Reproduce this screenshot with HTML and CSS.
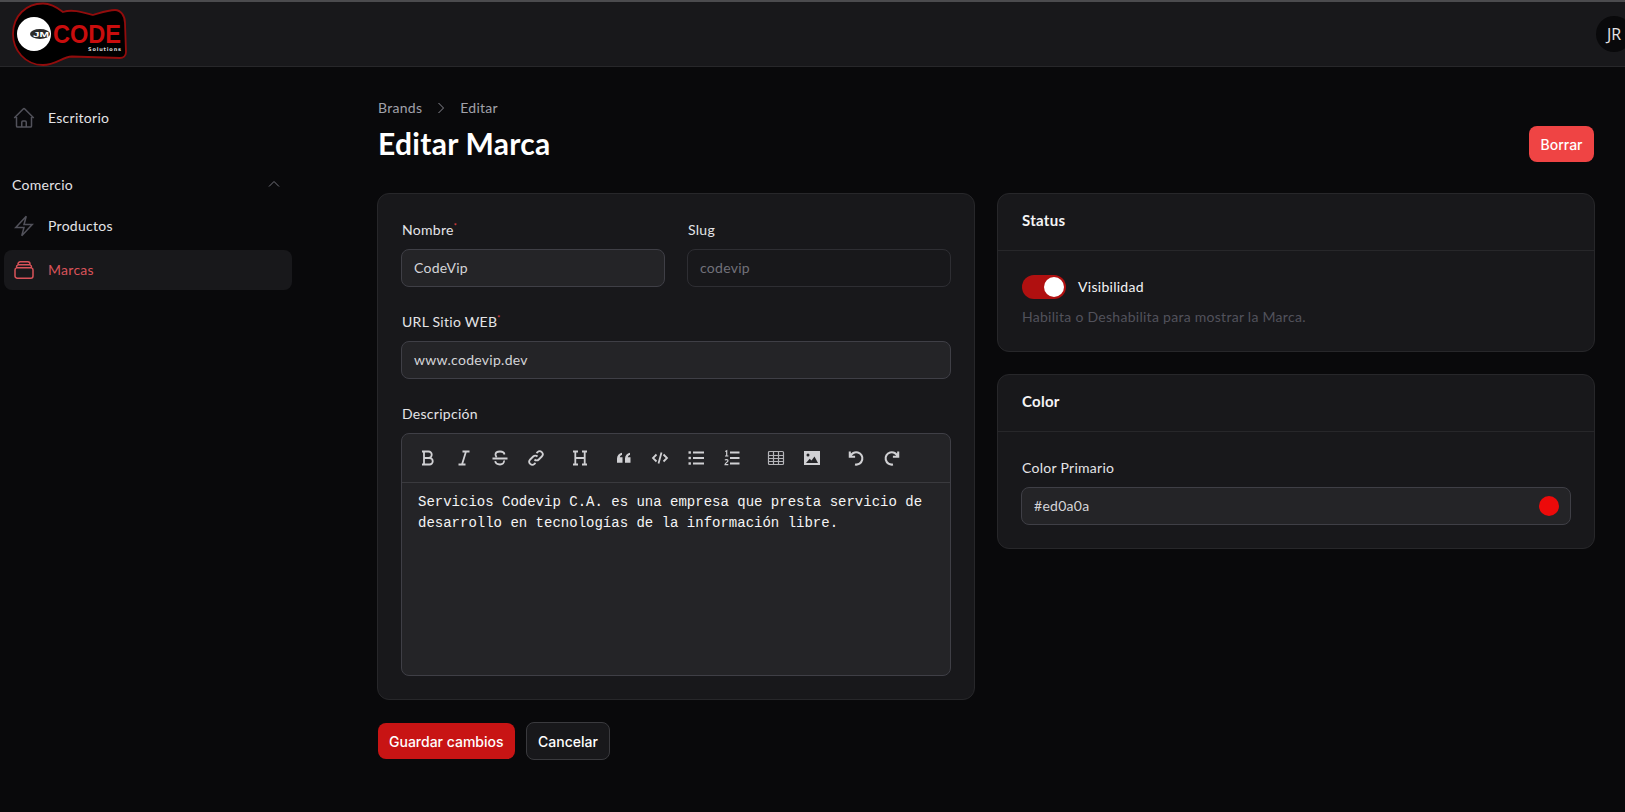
FILE: index.html
```html
<!DOCTYPE html>
<html lang="es">
<head>
    <meta charset="UTF-8">
    <meta name="viewport" content="width=device-width, initial-scale=1.0">
    <title>Editar Marca</title>
    <link rel="stylesheet" href="styles.css">
</head>
<body>
    <header class="topbar">
        <svg class="logo" viewBox="0 0 130 68" width="130" height="68">
            <path d="M43 3.500C52 3.500 58 8 63 12C72 9 82 12 93 15C100 13 108 10 115 10C121 10 125 16 125 23L126 52C126 56 123 58 120 58L72 56.500C62 57 56 65 43 65C25 65 13 50 13 34C13 16 26 3.500 43 3.500Z" fill="#000" stroke="#920c0c" stroke-width="1.800"/>
            <circle cx="34" cy="34" r="17" fill="#fff"/>
            <ellipse cx="40" cy="34" rx="10" ry="5" fill="#2a2a2a"/>
            <text x="33" y="37" class="logo-jm" textLength="16" lengthAdjust="spacingAndGlyphs">JM</text>
            <text x="53" y="43" class="logo-code" textLength="68" lengthAdjust="spacingAndGlyphs">CODE</text>
            <text x="88" y="51" class="logo-sol" textLength="33" lengthAdjust="spacing">Solutions</text>
        </svg>
        <div class="avatar">JR</div>
    </header>

    <div class="layout">
        <aside class="sidebar">
            <a class="nav-item">
                <svg class="nav-icon" viewBox="0 0 24 24"><path d="M2.25 12l8.954-8.955c.44-.439 1.152-.439 1.591 0L21.75 12M4.5 9.75v10.125c0 .621.504 1.125 1.125 1.125H9.75v-4.875c0-.621.504-1.125 1.125-1.125h2.25c.621 0 1.125.504 1.125 1.125V21h4.125c.621 0 1.125-.504 1.125-1.125V9.75M8.25 21h8.25"/></svg>
                <span>Escritorio</span>
            </a>
            <div class="nav-group">
                <span>Comercio</span>
                <svg class="nav-chevron" viewBox="0 0 24 24"><path d="M4.5 15.75l7.5-7.5 7.5 7.5"/></svg>
            </div>
            <a class="nav-item">
                <svg class="nav-icon" viewBox="0 0 24 24"><path d="M3.75 13.5l10.5-11.25L12 10.5h8.25L9.75 21.75 12 13.5H3.75z"/></svg>
                <span>Productos</span>
            </a>
            <a class="nav-item active">
                <svg class="nav-icon" viewBox="0 0 24 24"><path d="M6 6.878V6a2.25 2.25 0 012.25-2.25h7.5A2.25 2.25 0 0118 6v.878m-12 0c.235-.083.487-.128.75-.128h10.5c.263 0 .515.045.75.128m-12 0A2.25 2.25 0 004.5 9v.878m13.5-3A2.25 2.25 0 0119.5 9v.878m0 0a2.246 2.246 0 00-.75-.128H5.25c-.263 0-.515.045-.75.128m15 0A2.25 2.25 0 0121 12v6a2.25 2.25 0 01-2.25 2.25H5.25A2.25 2.25 0 013 18v-6c0-.98.626-1.813 1.5-2.122"/></svg>
                <span>Marcas</span>
            </a>
        </aside>

        <main class="content">
            <div class="page-head">
                <div>
                    <nav class="crumbs">
                        <span>Brands</span>
                        <svg viewBox="0 0 24 24"><path d="M8.25 4.5l7.5 7.5-7.5 7.5"/></svg>
                        <span>Editar</span>
                    </nav>
                    <h1>Editar Marca</h1>
                </div>
                <button class="btn btn-delete">Borrar</button>
            </div>

            <div class="columns">
                <section class="card form-card">
                    <div class="two-col">
                        <div>
                            <label class="field-label">Nombre<sup>*</sup></label>
                            <div class="input">CodeVip</div>
                        </div>
                        <div>
                            <label class="field-label">Slug</label>
                            <div class="input disabled">codevip</div>
                        </div>
                    </div>
                    <div class="field">
                        <label class="field-label">URL Sitio WEB<sup>*</sup></label>
                        <div class="input">www.codevip.dev</div>
                    </div>
                    <div class="field">
                        <label class="field-label">Descripción</label>
                        <div class="editor">
                            <div class="toolbar">
                                <div class="tool-group">
                                    <button class="tool"><svg viewBox="0 0 18 18"><path d="M3 2.500h6.500a3.200 3.200 0 0 1 0 6.500H5M5 2.500v13M5 9h5.500a3.200 3.200 0 0 1 0 6.500H3"/></svg></button>
                                    <button class="tool"><svg viewBox="0 0 18 18"><path d="M7.500 2.500h7M3.500 15.500h7M11 2.500L7 15.500"/></svg></button>
                                    <button class="tool"><svg viewBox="0 0 18 18"><path d="M13.500 5.500c-.300-2-2-3-4.500-3-3 0-4.500 1.300-4.500 3 0 1 .400 1.800 1.200 2.500M1.500 9.500h15M13 11.500c.500 2.500-1.500 4-4 4-3 0-4.500-1.300-4.800-3.300"/></svg></button>
                                    <button class="tool"><svg viewBox="0 0 18 18"><path d="M7.500 10.500a3 3 0 0 0 4.300 0l3-3a3 3 0 0 0-4.300-4.300l-1 1M10.500 7.500a3 3 0 0 0-4.300 0l-3 3a3 3 0 0 0 4.300 4.300l1-1"/></svg></button>
                                </div>
                                <div class="tool-group">
                                    <button class="tool"><svg viewBox="0 0 18 18"><path d="M2 2.500h5M11 2.500h5M2 15.500h5M11 15.500h5M4.300 2.500v13M13.700 2.500v13M4.300 9h9.400"/></svg></button>
                                </div>
                                <div class="tool-group">
                                    <button class="tool"><svg viewBox="0 0 18 18"><path class="solid" d="M2 9.500C2 6.500 4 4.300 7 3.700v2.300C5.800 6.400 5 7.200 4.800 8.200h2.700v5.500H2zM10 9.500C10 6.500 12 4.300 15 3.700v2.300c-1.200.400-2 1.200-2.200 2.200h2.700v5.500H10z"/></svg></button>
                                    <button class="tool"><svg viewBox="0 0 18 18"><path d="M5.500 5.500L2 9l3.500 3.500M12.500 5.500L16 9l-3.500 3.500M10.500 3.500l-3 11"/></svg></button>
                                    <button class="tool"><svg viewBox="0 0 18 18"><path d="M6 3.500H17M6 9H17M6 14.500H17"/><rect class="solid" x="1.500" y="2.300" width="2.400" height="2.400"/><rect class="solid" x="1.500" y="7.800" width="2.400" height="2.400"/><rect class="solid" x="1.500" y="13.300" width="2.400" height="2.400"/></svg></button>
                                    <button class="tool"><svg viewBox="0 0 18 18"><path d="M7 3.500H16.500M7 9H16.500M7 14.500H16.500"/><path class="thin" d="M2.300 2.500L3.700 1.700V7M2 7h3.400M2 11.200c.500-1 3-.900 3 .500 0 1.200-3 2.300-3 4h3.300"/></svg></button>
                                </div>
                                <div class="tool-group">
                                    <button class="tool"><svg viewBox="0 0 18 18"><path class="thin table" d="M2.500 2.500h13a1 1 0 0 1 1 1v11a1 1 0 0 1-1 1h-13a1 1 0 0 1-1-1v-11a1 1 0 0 1 1-1zM1.500 6.500h15M1.500 9.500h15M1.500 12.500h15M6.500 2.500v13M11.500 2.500v13"/></svg></button>
                                    <button class="tool"><svg viewBox="0 0 18 18"><path class="solid" fill-rule="evenodd" d="M1 2h16v14H1zM5 4.500a1.500 1.500 0 1 0 0 3 1.500 1.500 0 0 0 0-3zM3 14h12l-3.500-6.500-3 4-1.800-1.800z"/></svg></button>
                                </div>
                                <div class="tool-group">
                                    <button class="tool"><svg viewBox="0 0 18 18"><path class="arc" d="M2.800 2.500v5.300h5.300M3.300 7.500A6.200 6.200 0 1 1 8 15.500"/></svg></button>
                                    <button class="tool"><svg viewBox="0 0 18 18"><path class="arc" d="M15.200 2.500v5.300H9.900M14.700 7.500A6.200 6.200 0 1 0 10 15.500"/></svg></button>
                                </div>
                            </div>
                            <div class="editor-text">Servicios Codevip C.A. es una empresa que presta servicio de desarrollo en tecnologías de la información libre.</div>
                        </div>
                    </div>
                </section>

                <div class="side-column">
                    <section class="card">
                        <h2 class="card-title">Status</h2>
                        <div class="card-body">
                            <div class="toggle-row">
                                <span class="toggle"><span class="knob"></span></span>
                                <span>Visibilidad</span>
                            </div>
                            <p class="hint">Habilita o Deshabilita para mostrar la Marca.</p>
                        </div>
                    </section>
                    <section class="card">
                        <h2 class="card-title">Color</h2>
                        <div class="card-body color-body">
                            <label class="field-label">Color Primario</label>
                            <div class="input color-input">
                                <span>#ed0a0a</span>
                                <span class="swatch"></span>
                            </div>
                        </div>
                    </section>
                </div>
            </div>

            <div class="form-actions">
                <button class="btn btn-save">Guardar cambios</button>
                <button class="btn btn-cancel">Cancelar</button>
            </div>
        </main>
    </div>
</body>
</html>
```

FILE: styles.css
```css
* {
    box-sizing: border-box;
}
html, body {
    height: 100%;
    overflow: hidden;
}
body {
    margin: 0;
    background-color: #09090b;
    color: #f4f4f5;
    font-family: Lato, "Open Sans", sans-serif;
    font-size: 14px;
    letter-spacing: 0.28px;
}

/* top bar */
.topbar {
    display: flex;
    align-items: center;
    justify-content: space-between;
    height: 67px;
    background-color: #18181b;
    border-top: 2px solid #4b4b4e;
    border-bottom: 1px solid #27272a;
    letter-spacing: 0;
}
.logo {
    display: block;
    margin-top: -1px;
}
.logo-jm {
    font-family: "Liberation Sans", sans-serif;
    font-size: 8px;
    font-weight: 700;
    fill: #fff;
}
.logo-code {
    font-family: "Liberation Sans", sans-serif;
    font-size: 26px;
    font-weight: 700;
    fill: #c90d0d;
}
.logo-sol {
    font-family: "DejaVu Sans", sans-serif;
    font-size: 5px;
    font-weight: 700;
    fill: #ddd;
}
.avatar {
    display: flex;
    align-items: center;
    justify-content: center;
    flex: none;
    width: 36px;
    height: 36px;
    margin-right: -7px;
    border-radius: 50%;
    background-color: #09090b;
    color: #e4e4e7;
    font-family: "Open Sans", sans-serif;
    font-size: 16px;
}

/* sidebar */
.layout {
    display: flex;
}
.sidebar {
    flex: none;
    width: 296px;
    padding: 31px 4px 0;
}
.nav-item {
    display: flex;
    align-items: center;
    gap: 12px;
    height: 40px;
    margin-bottom: 4px;
    padding-left: 8px;
    border-radius: 8px;
    color: #e4e4e7;
    font-size: 14px;
}
.nav-item span {
    padding-bottom: 2px;
}
.nav-icon {
    width: 24px;
    height: 24px;
    fill: none;
    stroke: #52525b;
    stroke-width: 1.5;
}
.nav-item.active {
    background-color: #18181b;
    color: #d9535a;
}
.nav-item.active .nav-icon {
    stroke: #d9535a;
}
.nav-group {
    display: flex;
    align-items: center;
    justify-content: space-between;
    height: 24px;
    margin: 34px 0 10px;
    padding: 0 8px;
    color: #e4e4e7;
}
.nav-chevron {
    width: 16px;
    height: 16px;
    margin-right: 2px;
    fill: none;
    stroke: #71717a;
    stroke-width: 1.5;
}

/* page */
.content {
    flex: 1;
    padding: 30px 30px 0 81px;
}
.page-head {
    display: flex;
    align-items: flex-end;
    justify-content: space-between;
    margin: 0 1px;
}
.crumbs {
    display: flex;
    align-items: center;
    gap: 11px;
    height: 20px;
    color: #a1a1aa;
    font-size: 14px;
}
.crumbs svg {
    width: 16px;
    height: 16px;
    margin-top: 2px;
    fill: none;
    stroke: #8a8a93;
    stroke-width: 1.5;
}
h1 {
    margin: 8px 0 1px;
    color: #fff;
    font-size: 30px;
    font-weight: 700;
    line-height: 36px;
}
.btn {
    height: 36px;
    padding: 0 11.5px;
    border: 0;
    border-radius: 8px;
    color: #fff;
    font-family: Inter, sans-serif;
    font-size: 14px;
    font-weight: 500;
}
.btn-delete {
    background-color: #ef4444;
}
.columns {
    display: grid;
    grid-template-columns: 1fr 1fr;
    gap: 22px;
    align-items: start;
    margin-top: 31px;
}
.card {
    background-color: #18181b;
    border: 1px solid #27272a;
    border-radius: 12px;
}
.form-card {
    padding: 26px 23px 23px;
}
.two-col {
    display: grid;
    grid-template-columns: 1fr 1fr;
    gap: 22px;
}
.field {
    margin-top: 25px;
}
.field-label {
    display: block;
    height: 20px;
    margin-bottom: 9px;
    margin-left: 1px;
    color: #e4e4e7;
    font-size: 14px;
    line-height: 19px;
}
.field-label sup {
    color: #ef4444;
    font-size: 7px;
    line-height: 0;
}
.input {
    display: flex;
    align-items: center;
    height: 38px;
    padding: 0 12px 2px;
    background-color: #242427;
    border: 1px solid #3f3f46;
    border-radius: 8px;
    color: #d4d4d8;
    font-size: 14px;
}
.input.disabled {
    background-color: transparent;
    border-color: #2e2e33;
    color: #71717a;
}

/* markdown editor */
.editor {
    height: 243px;
    background-color: #242427;
    border: 1px solid #3f3f46;
    border-radius: 8px;
}
.toolbar {
    display: flex;
    gap: 8px;
    height: 49px;
    padding: 6px 8px 0;
    border-bottom: 1px solid #3a3a3e;
}
.tool-group {
    display: flex;
}
.tool {
    display: flex;
    align-items: center;
    justify-content: center;
    width: 36px;
    height: 36px;
    padding: 0;
    border: 0;
    background: none;
}
.tool svg {
    width: 18px;
    height: 18px;
    fill: none;
    stroke: #d0d0d3;
    stroke-width: 1.8;
}
.tool svg .solid {
    fill: #d0d0d3;
    stroke: none;
}
.tool svg .thin {
    stroke-width: 1.2;
}
.tool svg .table {
    stroke: #b4b4b8;
}
.tool svg .arc {
    stroke-width: 2.1;
}
.editor-text {
    padding: 9px 16px;
    color: #f4f4f5;
    font-family: "Liberation Mono", monospace;
    font-size: 14px;
    line-height: 21px;
    letter-spacing: 0;
}

/* right column */
.side-column {
    display: flex;
    flex-direction: column;
    gap: 22px;
}
.card-title {
    height: 57px;
    margin: 0;
    padding: 0 24px;
    border-bottom: 1px solid #27272a;
    color: #f4f4f5;
    font-size: 15px;
    font-weight: 700;
    line-height: 53px;
}
.card-body {
    padding: 24px;
}
.color-body {
    padding: 26px 23px 23px;
}
.toggle-row {
    display: flex;
    align-items: center;
    gap: 12px;
}
.toggle-row span:last-child {
    padding-bottom: 2px;
}
.toggle {
    display: flex;
    justify-content: flex-end;
    align-items: center;
    width: 44px;
    height: 24px;
    padding-right: 2px;
    border-radius: 12px;
    background-color: #b01010;
}
.knob {
    width: 20px;
    height: 20px;
    border-radius: 50%;
    background-color: #fff;
}
.hint {
    margin: 8px 0 0;
    color: #52525b;
    font-size: 14px;
    line-height: 20px;
}
.color-input {
    justify-content: space-between;
    padding-right: 11px;
}
.swatch {
    width: 20px;
    height: 20px;
    margin-top: 2px;
    border-radius: 50%;
    background-color: #ed0a0a;
}

/* bottom buttons */
.form-actions {
    display: flex;
    align-items: center;
    gap: 11px;
    margin: 22px 0 0 1px;
}
.btn-save {
    padding: 0 11px;
    background-color: #c81414;
}
.btn-cancel {
    height: 38px;
    background-color: #18181b;
    border: 1px solid #3a3a3e;
}
```
